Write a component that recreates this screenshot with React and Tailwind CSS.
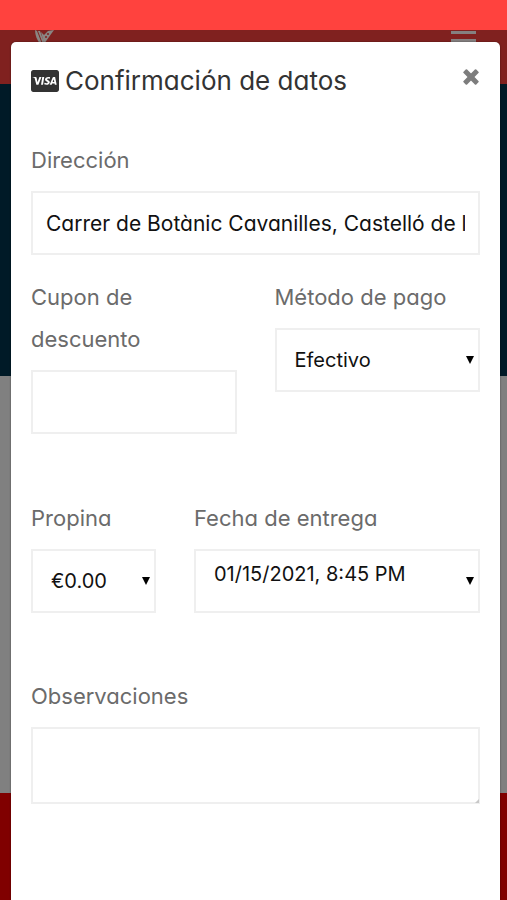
import React from "react";
import { FaCcVisa } from "react-icons/fa";

const labelClass = "block text-[22px] leading-[42px] text-[#6b6b6b]";
const boxClass =
  "mt-[10px] block h-16 w-full appearance-none rounded-none border-2 border-[#efefef] bg-white text-[#111] outline-none";

function Field({ id, label, className = "", children }) {
  return (
    <div className={className}>
      <label htmlFor={id} className={labelClass}>
        {label}
      </label>
      {children}
    </div>
  );
}

function Select({ id, value, padding = "" }) {
  return (
    <div className="relative">
      <select id={id} className={`${boxClass} pl-[18px] text-[20px] ${padding}`}>
        <option>{value}</option>
      </select>
      <svg
        viewBox="0 0 8 8"
        className="pointer-events-none absolute top-7 right-[6px] size-2 fill-black"
        aria-hidden="true"
      >
        <path d="M0 0h8L4 8z" />
      </svg>
    </div>
  );
}

function Backdrop() {
  return (
    <div className="flex min-h-screen flex-col" aria-hidden="true">
      <div className="h-[30px] bg-[#ff423e]" />
      <div className="flex h-[54px] items-start justify-between bg-[#80211f] pr-[31px] pl-[35px]">
        <svg viewBox="0 0 20 16" className="h-4 w-5 fill-[#8a8582]">
          <path d="M0 0l2 1 5 13h-2C2 10 0 5 0 0z" />
          <path d="M3 1h2l4 11-1 2z" />
          <path
            fillRule="evenodd"
            d="M6 2l3 3 4-4 6-1-5 7-5 7-1-4zM12 4a1 1 0 1 0 2 0 1 1 0 0 0-2 0zM10 7a1 1 0 1 0 2 0 1 1 0 0 0-2 0z"
          />
        </svg>
        <svg viewBox="0 0 25 20" className="h-5 w-[25px] fill-[#858080]">
          <path d="M0 1h25v3H0zM0 9h25v3H0zM0 17h25v3H0z" />
        </svg>
      </div>
      <div className="h-[292px] bg-[#001a27]" />
      <div className="h-[417px] bg-[#808080]" />
      <div className="flex-1 bg-[#800000]" />
    </div>
  );
}

export default function App() {
  return (
    <div className="relative min-h-screen overflow-hidden font-['Inter','Open_Sans',sans-serif] [font-feature-settings:'cv11']">
      <Backdrop />
      <div className="absolute inset-0 flex pt-[42px] pr-[7px] pl-[11px]">
        <div
          role="dialog"
          aria-labelledby="title"
          className="flex-1 rounded-t-[5px] bg-white px-5 shadow-[0_0_2px_rgba(0,0,0,0.5)]"
        >
          <header className="flex h-[77px] items-center justify-between">
            <h1
              id="title"
              className="flex items-center gap-[6px] text-[26px] text-[#333]"
            >
              <FaCcVisa className="size-7" />
              Confirmación de datos
            </h1>
            <button type="button" aria-label="Cerrar" className="mb-2 pr-px">
              <svg viewBox="0 0 16 16" className="size-4 fill-[#7d7d7d]">
                <g transform="rotate(45 8 8)">
                  <rect x="-1" y="5.5" width="18" height="5" rx="1" />
                  <rect x="5.5" y="-1" width="5" height="18" rx="1" />
                </g>
              </svg>
            </button>
          </header>

          <form className="pt-5">
            <Field id="direccion" label="Dirección">
              <input
                id="direccion"
                type="text"
                className={`${boxClass} px-[13px] text-[21px]`}
                defaultValue="Carrer de Botànic Cavanilles, Castelló de la Plana"
              />
            </Field>

            <div className="mt-[21px] grid grid-cols-2 gap-[38px]">
              <Field id="cupon" label={<>Cupon de<br />descuento</>}>
                <input
                  id="cupon"
                  type="text"
                  className={`${boxClass} px-[13px] text-[21px]`}
                />
              </Field>
              <Field id="pago" label="Método de pago">
                <Select id="pago" value="Efectivo" />
              </Field>
            </div>

            <div className="mt-[63px] flex gap-[38px]">
              <Field id="propina" label="Propina" className="w-[125px]">
                <Select id="propina" value="€0.00" />
              </Field>
              <Field id="fecha" label="Fecha de entrega" className="flex-1">
                <Select id="fecha" value="01/15/2021, 8:45 PM" padding="pb-[14px]" />
              </Field>
            </div>

            <Field id="observaciones" label="Observaciones" className="mt-[62px]">
              <div className="relative">
                <textarea
                  id="observaciones"
                  className="mt-[10px] block h-[77px] w-full resize-none border-2 border-[#efefef] bg-white px-[13px] py-2 text-[21px] text-[#111] outline-none"
                />
                <svg
                  viewBox="0 0 4 4"
                  className="pointer-events-none absolute right-px bottom-px size-1 fill-[#c8c8c8]"
                  aria-hidden="true"
                >
                  <path d="M4 0v4H0z" />
                </svg>
              </div>
            </Field>
          </form>
        </div>
      </div>
    </div>
  );
}
